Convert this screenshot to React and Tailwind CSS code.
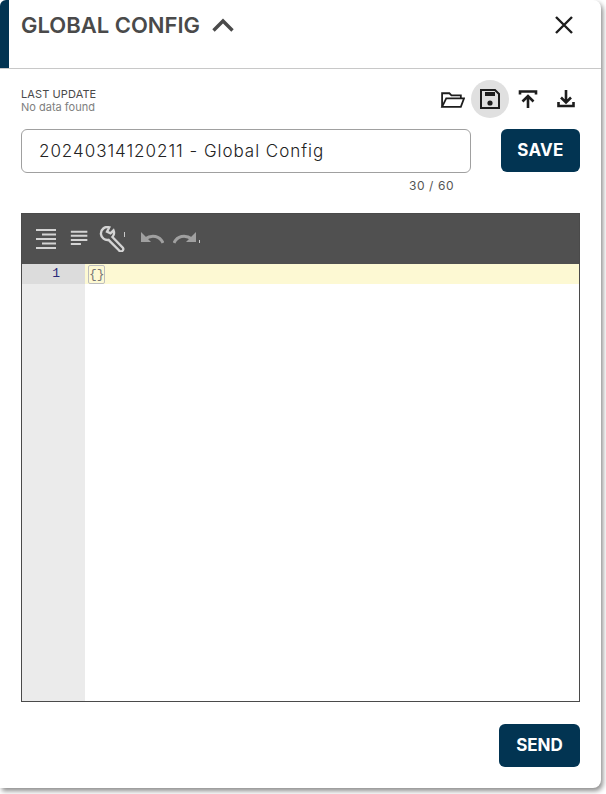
import React from 'react'

function IconButton({ active, children }) {
  return (
    <button className={`flex h-[38px] w-[38px] items-center justify-center rounded-full ${active ? 'bg-[#e0e0e0]' : ''}`}>
      {children}
    </button>
  )
}

function ToolIcon({ children, className }) {
  return (
    <svg viewBox="0 0 24 24" className={className} fill="none" stroke="#d4d4d4" strokeWidth="2.2">
      {children}
    </svg>
  )
}

function App() {
  return (
    <div className="h-[794px] w-[606px] overflow-hidden bg-white font-['Inter',sans-serif]">
      <div className="flex h-[788px] w-[601px] flex-col rounded-br-lg rounded-tr-lg bg-white shadow-[2px_3px_5px_rgba(0,0,0,0.45)]">
        {/* header */}
        <header className="flex h-[69px] shrink-0 border-b border-[#c8c8c8]">
          <div className="h-[68px] w-[9px] rounded-tl-md bg-[#023452]"></div>
          <div className="flex h-[50px] flex-1 items-center justify-between pl-3 pr-[25px]">
            <div className="flex items-center gap-[11px]">
              <h1 className="text-[22px] font-semibold text-[#4a4a4a]">GLOBAL CONFIG</h1>
              <svg viewBox="0 0 24 24" className="h-[24px] w-[24px]" fill="none" stroke="#4a4a4a" strokeWidth="3.4">
                <path d="M2.5 17.5 L12 8 L21.5 17.5" />
              </svg>
            </div>
            <svg viewBox="0 0 24 24" className="h-[24px] w-[24px]" fill="none" stroke="#1d1d1d" strokeWidth="2.4">
              <path d="M4 4 L20 20 M20 4 L4 20" />
            </svg>
          </div>
        </header>

        <div className="flex flex-1 flex-col px-[21px]">
          {/* last update + actions */}
          <div className="mt-[10px] flex h-[40px] items-center justify-between">
            <div className="pt-[3px] text-[11px] leading-[13px]">
              <div className="tracking-[0.1px] text-[#4a4a4a]">LAST UPDATE</div>
              <div className="text-[#808080]">No data found</div>
            </div>
            <div className="mr-[-5px] flex items-center">
              <IconButton>
                <svg viewBox="0 0 24 24" className="h-[25px] w-[25px]" fill="none" stroke="#1d1d1d" strokeWidth="1.7">
                  <path d="M2 19 V6 H9 L11 8 H20 V11" />
                  <path d="M2 19 L6 11 H23 L20 19 Z" />
                </svg>
              </IconButton>
              <IconButton active>
                <svg viewBox="0 0 24 24" className="h-[24px] w-[24px]" fill="none" stroke="#1d1d1d" strokeWidth="2">
                  <path d="M3 3 H17 L21 7 V21 H3 Z" />
                  <rect x="7" y="5" width="10" height="4" fill="#1d1d1d" stroke="none" />
                  <circle cx="12" cy="16" r="2.6" fill="#1d1d1d" stroke="none" />
                </svg>
              </IconButton>
              <IconButton>
                <svg viewBox="0 0 24 24" className="h-[24px] w-[24px]" fill="none" stroke="#1d1d1d" strokeWidth="2.6">
                  <path d="M4 7.5 V4.5 H20 V7.5" />
                  <path d="M12 21 V9.5 M6.5 14.5 L12 9 L17.5 14.5" />
                </svg>
              </IconButton>
              <IconButton>
                <svg viewBox="0 0 24 24" className="h-[24px] w-[24px]" fill="none" stroke="#1d1d1d" strokeWidth="2.6">
                  <path d="M4.5 15 V19 H19.5 V15" />
                  <path d="M12 3 V15 M7 10.5 L12 15.5 L17 10.5" />
                </svg>
              </IconButton>
            </div>
          </div>

          {/* name input */}
          <div className="mt-[10px] flex items-start justify-between">
            <div className="w-[450px]">
              <div className="flex h-[44px] items-center rounded-md border border-[#a0a0a0] pl-[17px] pt-[2px] text-[17px] font-light tracking-[0.97px] text-[#222]">
                20240314120211 - Global Config
              </div>
              <div className="mt-[5px] pr-[17px] text-right text-[12px] leading-[15px] tracking-[0.55px] text-[#555]">30 / 60</div>
            </div>
            <button className="h-[43px] w-[79px] rounded-md bg-[#023452] text-[17px] font-bold tracking-[0.3px] text-white">SAVE</button>
          </div>

          {/* editor */}
          <div className="mt-[20px] flex h-[489px] flex-col border border-[#4a4a4a]">
            <div className="flex h-[50px] shrink-0 items-center bg-[#505050] pl-[12px]">
              <ToolIcon className="h-[24px] w-[24px]">
                <path d="M2 3 H22 M8 7.5 H22 M2 12 H22 M8 16.5 H22 M2 21 H22" />
              </ToolIcon>
              <ToolIcon className="ml-[11px] h-[22px] w-[22px]">
                <path d="M2 4 H20 M2 8.5 H20 M2 13 H20 M2 17.5 H13" />
              </ToolIcon>
              <ToolIcon className="ml-[8px] h-[26px] w-[26px]">
                <path d="M9.5 1.2 A6 6 0 0 0 1.8 7.5 A6 6 0 0 0 8.8 12.8 L18.6 22.6 A2 2 0 0 0 22 20 L12.4 10.2 A6 6 0 0 0 13.4 4 L10.6 6.8 L7.4 5.2 Z" />
              </ToolIcon>
              <div className="mb-[10px] ml-[-1px] h-[5px] w-px bg-[#c8c8c8]"></div>
              <ToolIcon className="ml-[15px] h-[24px] w-[24px]">
                <path d="M23 16 C20 9 12 7 5 12" strokeWidth="3" stroke="#a0a0a0" />
                <path d="M1 5 V15 H11 Z" fill="#a0a0a0" stroke="none" />
              </ToolIcon>
              <ToolIcon className="ml-[9px] h-[24px] w-[24px]">
                <path d="M1 16 C4 9 12 7 19 12" strokeWidth="3" stroke="#a0a0a0" />
                <path d="M23 5 V15 H13 Z" fill="#a0a0a0" stroke="none" />
              </ToolIcon>
              <div className="ml-[2px] mt-[4px] h-[3px] w-px bg-[#c8c8c8]"></div>
            </div>
            <div className="flex flex-1 font-['Liberation_Mono',monospace] text-[13px]">
              <div className="w-[63px] bg-[#ebebeb]">
                <div className="h-[20px] bg-[#dcdcdc] pr-[25px] text-right leading-[20px] text-[#2a2a7a]">1</div>
              </div>
              <div className="flex-1">
                <div className="flex h-[20px] items-center bg-[#fdf9d3] pl-[3px]">
                  <span className="h-[19px] w-[17px] rounded-[2px] border border-[#bdbdbd] text-center leading-[17px] text-[#777]">{'{}'}</span>
                </div>
              </div>
            </div>
          </div>

          {/* footer */}
          <div className="mt-[22px] flex justify-end">
            <button className="h-[43px] w-[81px] rounded-md bg-[#023452] text-[17px] font-bold text-white">SEND</button>
          </div>
        </div>
      </div>
    </div>
  )
}

export default App
